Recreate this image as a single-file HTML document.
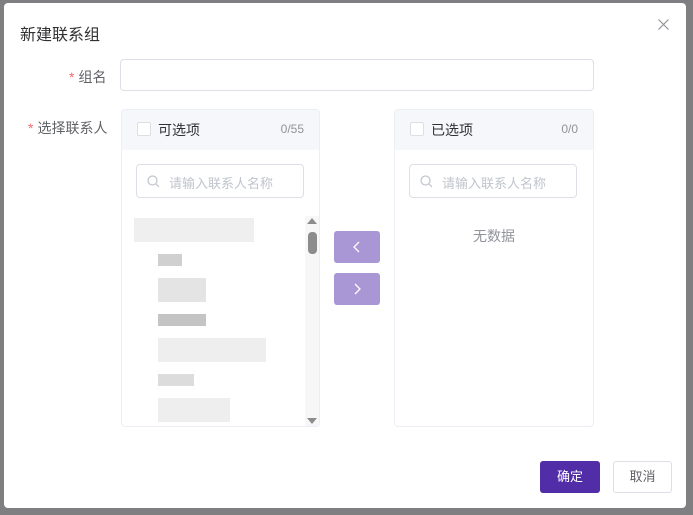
<!DOCTYPE html><html><head><meta charset="utf-8"><style>
*{box-sizing:border-box;margin:0;padding:0}
body{width:693px;height:515px;background:#7f7f82;position:relative;overflow:hidden;font-family:"Liberation Sans","Noto Sans CJK SC",sans-serif;font-size:14px;color:#606266}
.dlg{position:absolute;left:4px;top:3px;width:682px;height:505px;background:#fff;border-radius:4px}
.abs{position:absolute}
.title{left:16px;top:18px;font-size:16px;color:#303133}
.req{color:#f56c6c;margin-right:4px}
.inp{border:1px solid #dcdfe6;border-radius:4px;background:#fff}
.panel{border:1px solid #ebeef5;border-radius:4px;overflow:hidden}
.ph{height:40px;background:#f5f7fa;position:relative}
.cb{position:absolute;left:15px;top:12px;width:14px;height:14px;border:1px solid #dcdfe6;border-radius:2px;background:#fff}
.pt{position:absolute;left:36px;top:10px;font-size:14px;color:#303133}
.pc{position:absolute;right:15px;top:12px;font-size:12px;color:#909399}
.srch{position:absolute;left:14px;top:54px;width:168px;height:34px;border:1px solid #dcdfe6;border-radius:4px}
.srch span{position:absolute;left:32px;top:8px;font-size:13px;color:#c0c4cc}
.btn{position:absolute;border-radius:3px;text-align:center;font-size:13px}
.b{position:absolute;background:#e6e6e6}
</style></head><body>
<div class="dlg">
<div class="abs title">新建联系组</div>
<svg class="abs" style="left:654px;top:16px" width="11" height="11" viewBox="0 0 11 11"><path d="M0.5 0.5l10 10M10.5 0.5l-10 10" stroke="#909399" stroke-width="1.2"/></svg>
<div class="abs" style="left:65px;top:64px"><span class="req">*</span>组名</div>
<div class="abs inp" style="left:116px;top:56px;width:474px;height:32px"></div>
<div class="abs" style="left:24px;top:115px"><span class="req">*</span>选择联系人</div>
<div class="abs panel" style="left:117px;top:106px;width:199px;height:318px">
<div class="ph"><div class="cb"></div><div class="pt">可选项</div><div class="pc">0/55</div></div>
<div class="srch"><svg class="abs" style="left:10px;top:10px" width="13" height="13" viewBox="0 0 13 13"><circle cx="5.5" cy="5.5" r="4.5" fill="none" stroke="#c0c4cc" stroke-width="1.2"/><path d="M9 9l3 3" stroke="#c0c4cc" stroke-width="1.2"/></svg><span>请输入联系人名称</span></div>
<div class="b" style="left:12px;top:108px;width:120px;height:24px;background:#efefef"></div>
<div class="b" style="left:36px;top:144px;width:24px;height:12px;background:#d0d0d0"></div>
<div class="b" style="left:36px;top:168px;width:48px;height:24px;background:#e4e4e4"></div>
<div class="b" style="left:36px;top:204px;width:48px;height:12px;background:#c4c4c4"></div>
<div class="b" style="left:36px;top:228px;width:108px;height:24px;background:#eeeeee"></div>
<div class="b" style="left:36px;top:264px;width:36px;height:12px;background:#dcdcdc"></div>
<div class="b" style="left:36px;top:288px;width:72px;height:24px;background:#eeeeee"></div>
<div class="b" style="left:183px;top:106px;width:15px;height:212px;background:#f7f7f7"></div>
<div class="b" style="left:186px;top:122px;width:9px;height:22px;border-radius:4px;background:#8c8c8c"></div>
<div class="abs" style="left:185px;top:108px;width:0;height:0;border:5px solid transparent;border-bottom:6px solid #8c8c8c;border-top:0"></div>
<div class="abs" style="left:185px;top:308px;width:0;height:0;border:5px solid transparent;border-top:6px solid #8c8c8c;border-bottom:0"></div>
</div>
<div class="btn" style="left:330px;top:228px;width:46px;height:32px;background:#a996d4"><svg class="abs" style="left:19px;top:10px" width="7" height="12" viewBox="0 0 7 12"><path d="M6 1L1 6l5 5" fill="none" stroke="#fff" stroke-width="1.3"/></svg></div>
<div class="btn" style="left:330px;top:270px;width:46px;height:32px;background:#a996d4"><svg class="abs" style="left:20px;top:10px" width="7" height="12" viewBox="0 0 7 12"><path d="M1 1l5 5-5 5" fill="none" stroke="#fff" stroke-width="1.3"/></svg></div>
<div class="abs panel" style="left:390px;top:106px;width:200px;height:318px">
<div class="ph"><div class="cb"></div><div class="pt">已选项</div><div class="pc">0/0</div></div>
<div class="srch"><svg class="abs" style="left:10px;top:10px" width="13" height="13" viewBox="0 0 13 13"><circle cx="5.5" cy="5.5" r="4.5" fill="none" stroke="#c0c4cc" stroke-width="1.2"/><path d="M9 9l3 3" stroke="#c0c4cc" stroke-width="1.2"/></svg><span>请输入联系人名称</span></div>
<div class="abs" style="left:0;width:100%;top:116px;text-align:center;color:#909399;font-size:14px">无数据</div>
</div>
<div class="btn" style="left:536px;top:458px;width:60px;height:32px;background:#512da8;color:#fff;line-height:32px">确定</div>
<div class="btn" style="left:609px;top:458px;width:59px;height:32px;border:1px solid #dcdfe6;color:#606266;line-height:30px">取消</div>
</div>
</body></html>
